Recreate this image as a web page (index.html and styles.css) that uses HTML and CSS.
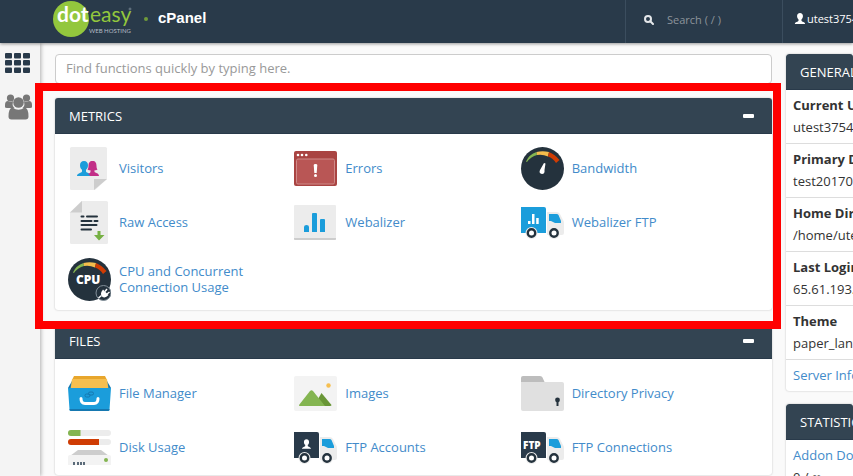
FILE: index.html
```html
<!DOCTYPE html>
<html lang="en">
<head>
  <meta charset="UTF-8">
  <meta name="viewport" content="width=device-width, initial-scale=1.0">
  <title>cPanel</title>
  <link rel="stylesheet" href="styles.css">
</head>
<body>
  <!-- shared shapes -->
  <svg class="defs" width="0" height="0" aria-hidden="true">
    <symbol id="person" viewBox="0 0 14 15">
      <path d="M7 0C4.400 0 3 1.800 3 4.200c0 2 .8 3.700 2 4.600v1.700C4.700 12 0 12 0 15h14c0-3-4.700-3-5-4.500V8.800c1.200-.9 2-2.600 2-4.600C11 1.800 9.600 0 7 0z"/>
    </symbol>
    <symbol id="gauge" viewBox="0 0 43 43">
      <circle cx="21.500" cy="21.500" r="21.500" fill="#24323d"/>
      <path d="M5 14.500Q8 7.500 15.500 5L16 8Q10 9.500 6 15z" fill="#84b551"/>
      <path d="M15.500 5Q21.500 3.500 28 5L27 9.500Q21.500 7 16 8z" fill="#f4bd4c"/>
      <path d="M28 5Q34 7.500 38.500 13L35 16Q32 11 27 9.500z" fill="#cf3c04"/>
    </symbol>
    <symbol id="truck" viewBox="0 0 43 43">
      <path d="M0 6h23q2 0 2 2v24H0z" fill="currentColor"/>
      <path d="M26 11h9q3 0 4 2l3 6q1 1 1 3v10q0 2-2 2H26z" fill="#ececec"/>
      <path d="M28 13h7.500q1.500 0 2 1l2.500 6v2h-6l-4-2h-2z" fill="#1b9ddb"/>
      <circle cx="10.500" cy="32" r="6" fill="#ececec"/>
      <circle cx="33" cy="32" r="6" fill="#ececec"/>
      <circle cx="10.500" cy="32" r="3.700" fill="#fff" stroke="#24323d" stroke-width="2.400"/>
      <circle cx="33" cy="32" r="3.700" fill="#fff" stroke="#24323d" stroke-width="2.400"/>
    </symbol>
  </svg>

  <header class="topbar">
    <a class="brand" href="#">
      <svg width="80" height="38" viewBox="0 0 80 38" role="img" aria-label="doteasy web hosting">
        <circle cx="18" cy="19" r="18" fill="#93c73d"/>
        <text x="4" y="22" class="logo-dot">dot</text>
        <text x="37" y="22" class="logo-easy">easy</text>
        <text x="36" y="33" class="logo-sub">WEB HOSTING</text>
        <circle cx="77" cy="9" r="1" fill="none" stroke="#93a0ac" stroke-width=".6"/>
      </svg>
      <span class="brand-dot"></span>
      <span class="brand-name">cPanel</span>
    </a>
    <div class="top-search">
      <svg width="10" height="10" viewBox="0 0 10 10" aria-hidden="true">
        <circle cx="4" cy="4" r="3" fill="none" stroke="#e4e7ea" stroke-width="2"/>
        <path d="M6.300 6.300L9 9" stroke="#e4e7ea" stroke-width="2" stroke-linecap="round"/>
      </svg>
      <input type="text" aria-label="Search" placeholder="Search ( / )">
    </div>
    <a class="user" href="#">
      <svg width="12" height="11" aria-hidden="true" fill="#fff"><use href="#person"/></svg>
      utest37549
    </a>
  </header>

  <div class="layout">
    <nav class="sidenav">
      <a href="#" aria-label="Home">
        <svg width="26" height="20" viewBox="0 0 26 20" fill="#293a4a">
          <rect width="7" height="5.500" rx="1"/><rect x="9" width="7" height="5.500" rx="1"/><rect x="18" width="7" height="5.500" rx="1"/>
          <rect y="7" width="7" height="5.500" rx="1"/><rect x="9" y="7" width="7" height="5.500" rx="1"/><rect x="18" y="7" width="7" height="5.500" rx="1"/>
          <rect y="14.500" width="7" height="5.500" rx="1"/><rect x="9" y="14.500" width="7" height="5.500" rx="1"/><rect x="18" y="14.500" width="7" height="5.500" rx="1"/>
        </svg>
      </a>
      <a href="#" aria-label="Users">
        <svg width="27" height="26" viewBox="0 0 27 26" fill="#777">
          <circle cx="5.500" cy="4" r="3.600"/><circle cx="21.500" cy="4" r="3.600"/>
          <path d="M0 13V11q0-4 3-4 3 1.500 5 0-1 4 .5 6l1 1H2q-2 0-2-1zM27 13V11q0-4-3-4-3 1.500-5 0 1 4-.5 6l-1 1H25q2 0 2-1z"/>
          <circle cx="13.500" cy="8.500" r="5.300"/>
          <path d="M7.500 13.500q-4 .5-4 9 0 3 3 3h14q3 0 3-3 0-8.500-4-9-6 4.500-12 0z"/>
        </svg>
      </a>
    </nav>

    <main class="main">
      <input class="finder" type="text" aria-label="Find functions" placeholder="Find functions quickly by typing here.">

      <section class="panel highlight">
        <div class="panel-head">
          <h2>METRICS</h2>
          <button class="collapse" type="button" aria-label="Collapse metrics"></button>
        </div>
        <div class="items">
          <a class="item" href="#">
            <svg class="icon" viewBox="0 0 43 43">
              <path d="M3.500 0h34q1.500 0 1.500 1.500V32L27 43H3.500Q2 43 2 41.500v-40Q2 0 3.500 0z" fill="#ececec"/>
              <path d="M26 32h13L26 43z" fill="#cdcdcd"/>
              <use href="#person" x="9" y="14" width="14" height="15" fill="#1b9ddb"/>
              <path d="M24.500 14c-3 0-4 2-4 5 0 2-.5 3-1 3.500 1 .7 2 .8 3 .8v1.500c-.3 1.500-1.500 1.700-2.500 2.200 1.500.5 2 1.200 2 2h9c0-3-4-3-4.500-4.200v-1.500c1 0 2-.1 3-.8-.5-.5-1-1.500-1-3.500 0-3-1-5-4-5z" fill="#c22e87"/>
            </svg>
            <span>Visitors</span>
          </a>
          <a class="item" href="#">
            <svg class="icon" viewBox="0 0 43 43">
              <rect y="4" width="43" height="35" rx="2" fill="#a94442"/>
              <rect x="2.500" y="12" width="38" height="25" rx="1.500" fill="#b95655" stroke="#cf8a89"/>
              <circle cx="4" cy="8" r="1.300" fill="#fff"/><circle cx="8" cy="8" r="1.300" fill="#fff"/><circle cx="12.300" cy="8" r="1.300" fill="#fff"/>
              <path d="M19.700 18q0-1 1.800-1t1.800 1l-.6 8h-2.400z" fill="#fff"/>
              <circle cx="21.500" cy="28.500" r="1.500" fill="#fff"/>
            </svg>
            <span>Errors</span>
          </a>
          <a class="item" href="#">
            <svg class="icon" viewBox="0 0 43 43">
              <use href="#gauge"/>
              <path d="M23 16l1.500.5L23.500 23q.5 4-2.500 4-3.500-.5-2-4z" fill="#fff"/>
            </svg>
            <span>Bandwidth</span>
          </a>
          <a class="item" href="#">
            <svg class="icon" viewBox="0 0 43 43">
              <path d="M13.500 0H38.500Q40 0 40 1.500v40q0 1.500-1.500 1.500h-35Q2 43 2 41.500V11.500z" fill="#ececec"/>
              <path d="M14 0v11.500H2z" fill="#cdcdcd"/>
              <path d="M13.500 15.500h2M19 15.500h10M13.500 20h10M26.500 20h3M13.500 24h15M13.500 28.500h9.500" stroke="#24323d" stroke-width="2" stroke-linecap="round"/>
              <path d="M29.500 30h3v4h4l-5.500 5.500L26 34h3.500z" fill="#76b043"/>
            </svg>
            <span>Raw Access</span>
          </a>
          <a class="item" href="#">
            <svg class="icon" viewBox="0 0 43 43">
              <rect y="4" width="42" height="35" rx="1" fill="#ececec"/>
              <path d="M0 37h42v1q0 1-1 1H1q-1 0-1-1z" fill="#cdcdcd"/>
              <path d="M10 31v-5q0-2 2.500-2t2.500 2v5zM18 31V13q0-1 1-1h3q1 0 1 1v18zM26 31V19q0-1 1-1h3q1 0 1 1v12z" fill="#1b9ddb"/>
            </svg>
            <span>Webalizer</span>
          </a>
          <a class="item" href="#">
            <svg class="icon truck-blue" viewBox="0 0 43 43">
              <use href="#truck"/>
              <path d="M7 23v-3h2.500v3zM11 23V13h2.500v10zM15.200 23v-6h2.500v6z" fill="#fff"/>
            </svg>
            <span>Webalizer FTP</span>
          </a>
          <a class="item" href="#">
            <svg class="icon" viewBox="0 0 43 43">
              <use href="#gauge"/>
              <text x="8" y="26" class="cpu-text">CPU</text>
              <circle cx="35.500" cy="35" r="7.500" fill="#24323d" stroke="#83909a"/>
              <path d="M30.500 40l3-2.500M37 33.500l2-2.500M39 36l2.500-2" stroke="#fff" stroke-width="1.500"/>
              <path d="M35 31.500l5.500 5.500q-3.500 4-6.500 1.500-2.500-3 1-7z" fill="#fff"/>
            </svg>
            <span>CPU and Concurrent Connection Usage</span>
          </a>
        </div>
      </section>

      <section class="panel">
        <div class="panel-head">
          <h2>FILES</h2>
          <button class="collapse" type="button" aria-label="Collapse files"></button>
        </div>
        <div class="items">
          <a class="item" href="#">
            <svg class="icon" viewBox="0 0 43 43">
              <path d="M6 4h31l2 4H4z" fill="#e8a62c"/>
              <path d="M0 16L4 9l35 0 4 7z" fill="#1678b0"/>
              <path d="M4 7h35l1.500 10h-38z" fill="#f6bf50"/>
              <path d="M0 16h43l-1.500 21.500q0 1.500-1.500 1.500H3q-1.500 0-1.500-1.500z" fill="#1b9ddb"/>
              <path d="M1.400 37h40.200q0 2-1.600 2H3q-1.500 0-1.600-2z" fill="#1678b0"/>
              <path d="M13 26.500q0 5 4 5h9q4 0 4-5" fill="none" stroke="#fff" stroke-width="3" stroke-linecap="round"/>
              <g fill="none" stroke="#1678b0"><rect x="17" y="22" width="5" height="3" rx="1.500"/><rect x="20.500" y="20" width="5" height="3" rx="1.500"/></g>
            </svg>
            <span>File Manager</span>
          </a>
          <a class="item" href="#">
            <svg class="icon" viewBox="0 0 43 43">
              <rect y="4" width="43" height="35" rx="2" fill="#f3f3f3"/>
              <path d="M20 34l7.500-13 10 12q0 1-1.500 1z" fill="#699636"/>
              <path d="M5 33L16 19q1.500-1.500 3 0l12 15H6q-1.500 0-1-1z" fill="#84b551"/>
              <circle cx="34.500" cy="13.500" r="2.200" fill="#f6bf50"/>
            </svg>
            <span>Images</span>
          </a>
          <a class="item" href="#">
            <svg class="icon" viewBox="0 0 43 43">
              <path d="M0 12V6q0-2 2-2h17q2 0 2.500 1.500L24 11z" fill="#bdbdbd"/>
              <path d="M0 10h41q2 0 2 2v25q0 2-2 2H2q-2 0-2-2z" fill="#e0e0e0"/>
              <circle cx="36.500" cy="28" r="2.400" fill="#24323d"/>
              <path d="M35.500 28h2v6h-2z" fill="#24323d"/>
            </svg>
            <span>Directory Privacy</span>
          </a>
          <a class="item" href="#">
            <svg class="icon" viewBox="0 0 43 43">
              <rect y="4" width="43" height="6" rx="3" fill="#ececec"/>
              <path d="M12.500 4H3a3 3 0 0 0 0 6h9.500z" fill="#84b551"/>
              <rect y="13" width="43" height="6" rx="3" fill="#ececec"/>
              <path d="M31 13H3a3 3 0 0 0 0 6h28z" fill="#cf3c04"/>
              <path d="M10 24h23l8 6H2z" fill="#cdcdcd"/>
              <path d="M2 29h39q2 0 2 2v8H0v-8q0-2 2-2z" fill="#f3f3f3"/>
              <path d="M5 36h2v3H5zM9 36h2v3H9zM12 36h2v3h-2zM15 36h2v3h-2z" fill="#5b6b79"/>
              <circle cx="38" cy="34" r="2" fill="#84b551"/>
            </svg>
            <span>Disk Usage</span>
          </a>
          <a class="item" href="#">
            <svg class="icon truck-dark" viewBox="0 0 43 43">
              <use href="#truck"/>
              <use href="#person" x="8" y="13" width="9" height="10" fill="#fff"/>
            </svg>
            <span>FTP Accounts</span>
          </a>
          <a class="item" href="#">
            <svg class="icon truck-dark" viewBox="0 0 43 43">
              <use href="#truck"/>
              <text x="2" y="23" class="ftp-text">FTP</text>
            </svg>
            <span>FTP Connections</span>
          </a>
        </div>
      </section>
    </main>

    <aside class="info">
      <section class="panel">
        <div class="panel-head"><h2>GENERAL</h2></div>
        <dl class="rows">
          <div class="row"><dt>Current Us</dt><dd>utest37549</dd></div>
          <div class="row"><dt>Primary Do</dt><dd>test201703</dd></div>
          <div class="row"><dt>Home Direc</dt><dd>/home/utes</dd></div>
          <div class="row"><dt>Last Login</dt><dd>65.61.193.</dd></div>
          <div class="row"><dt>Theme</dt><dd>paper_lante</dd></div>
        </dl>
        <a class="row-link" href="#">Server Info</a>
      </section>
      <section class="panel">
        <div class="panel-head"><h2>STATISTICS</h2></div>
        <div class="stat"><a href="#">Addon Dom</a><span>0 / ∞</span></div>
      </section>
    </aside>
  </div>
</body>
</html>
```
FILE: styles.css
```css
* {
  box-sizing: border-box;
}

body {
  display: flex;
  flex-direction: column;
  height: 100vh;
  margin: 0;
  overflow: hidden;
  background-color: #fafafa;
  color: #333;
  font-family: "Open Sans", sans-serif;
  font-size: 13px;
}

input, button {
  font-family: inherit;
  font-size: inherit;
}

a {
  color: #428bca;
  text-decoration: none;
}

.defs {
  position: absolute;
}

/* top bar */
.topbar {
  position: relative;
  z-index: 2;
  display: flex;
  flex: none;
  height: 43px;
  background-color: #293a4a;
  box-shadow: 0 1px 3px rgba(0, 0, 0, 0.4);
}

.brand {
  display: flex;
  flex: 1;
  align-items: center;
  padding: 0 0 5px 53px;
  color: #fff;
}

.logo-dot, .logo-easy {
  font-family: Lato, sans-serif;
  font-size: 21px;
}

.logo-dot {
  fill: #fff;
  font-weight: bold;
}

.logo-easy {
  fill: #93c73d;
}

.logo-sub {
  fill: #b4bcc4;
  font-family: Lato, sans-serif;
  font-size: 6px;
}

.brand-dot {
  width: 4px;
  height: 4px;
  margin: 0 10px 0 11px;
  border-radius: 50%;
  background-color: #6f9a3a;
}

.brand-name {
  padding-bottom: 3px;
  font-family: "Liberation Sans", Arial, sans-serif;
  font-size: 15px;
  font-weight: bold;
}

.top-search {
  display: flex;
  flex: none;
  align-items: center;
  width: 157px;
  padding: 0 18px 4px;
  gap: 13px;
  border-left: 1px solid #3b4d5e;
}

.top-search svg {
  flex: none;
}

.top-search input {
  width: 100%;
  min-width: 0;
  padding: 0;
  border: 0;
  outline: 0;
  background: none;
  color: #fff;
  font-size: 11px;
}

.top-search input::placeholder {
  color: #8d949b;
}

.user {
  display: flex;
  flex: none;
  align-items: center;
  width: 71px;
  padding: 0 0 6px 11px;
  gap: 1px;
  overflow: hidden;
  border-left: 1px solid #3b4d5e;
  color: #fff;
  font-size: 11px;
}

.user svg {
  flex: none;
}

/* page */
.layout {
  display: flex;
  flex: 1;
  min-height: 0;
}

.sidenav {
  display: flex;
  flex: none;
  flex-direction: column;
  gap: 21px;
  width: 40px;
  padding: 10px 5px;
  background-color: #f4f4f4;
  box-shadow: 1px 0 4px rgba(0, 0, 0, 0.3);
}

.sidenav svg {
  display: block;
}

.main {
  flex: 1;
  min-width: 0;
  padding: 11px 14px 0 15px;
}

.finder {
  display: block;
  width: 100%;
  height: 30px;
  margin-bottom: 14px;
  padding: 0 10px 2px;
  border: 1px solid #ccc;
  border-radius: 4px;
  background-color: #fff;
}

.finder::placeholder {
  color: #999;
}

.panel {
  margin-bottom: 13px;
  border-radius: 3px;
  background-color: #fff;
  box-shadow: 0 0 2px rgba(0, 0, 0, 0.25);
}

.panel-head {
  display: flex;
  align-items: center;
  justify-content: space-between;
  height: 36px;
  padding: 0 18px 0 14px;
  border-bottom: 1px solid #293a4a;
  border-radius: 3px 3px 0 0;
  background-color: #334452;
  color: #fff;
}

.panel-head h2 {
  margin: 0;
  font-size: 13px;
  font-weight: normal;
}

.collapse {
  width: 11px;
  height: 4px;
  padding: 0;
  border: 0;
  border-radius: 1px;
  background-color: #fff;
  cursor: pointer;
}

/* red frame round the section */
.highlight {
  position: relative;
}

.highlight::after {
  content: "";
  position: absolute;
  z-index: 1;
  inset: -15px -9px -19px -20px;
  border: 8px solid #f00;
  pointer-events: none;
}

.items {
  display: grid;
  grid-template-columns: repeat(3, 1fr);
  padding: 7px 25px 1px 13px;
}

.item {
  display: flex;
  align-items: center;
  gap: 8px;
  min-height: 54px;
  line-height: 16px;
}

.item span {
  max-width: 140px;
  padding: 14px 0;
}

.icon {
  flex: none;
  width: 43px;
  height: 43px;
}

.truck-blue {
  color: #1b9ddb;
}

.truck-dark {
  color: #293a4a;
}

.cpu-text, .ftp-text {
  fill: #fff;
  font-weight: 800;
}

.cpu-text {
  font-size: 12px;
}

.ftp-text {
  font-size: 10px;
}

/* right column */
.info {
  flex: none;
  width: 67px;
  padding-top: 11px;
  white-space: nowrap;
}

.info .panel {
  overflow: hidden;
  border-radius: 3px 0 0 3px;
}

.rows {
  margin: 0;
}

.row {
  padding: 4px 0 5px 7px;
  border-bottom: 1px solid #ddd;
  line-height: 22px;
}

.row dt {
  font-weight: bold;
}

.row dd {
  margin: 0;
}

.row-link {
  display: block;
  padding: 4px 7px 5px;
  line-height: 22px;
}

.stat {
  display: flex;
  flex-direction: column;
  padding: 4px 7px;
  line-height: 22px;
}
```
